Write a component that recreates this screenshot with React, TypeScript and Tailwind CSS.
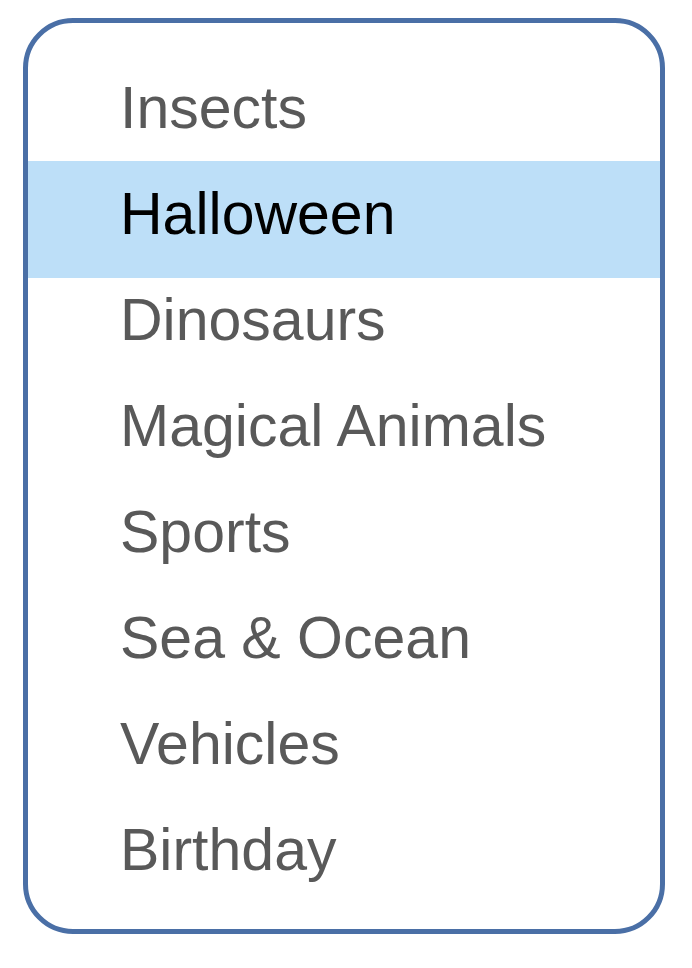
import React from 'react';

const items = ['Insects', 'Halloween', 'Dinosaurs', 'Magical Animals', 'Sports', 'Sea & Ocean', 'Vehicles', 'Birthday'];

const App: React.FC = () => {
  const selected = 'Halloween';

  return (
    <div className="w-[692px] h-[968px] bg-white pl-[23px] pt-[18px]" style={{ fontFamily: '"Liberation Sans", Arial, sans-serif' }}>
      <div className="w-[642px] h-[916px] border-[5px] border-[#4a6fa6] rounded-[50px] pt-[32px] flex flex-col">
        {items.map(item => (
          item === selected ? (
            <div key={item} className="h-[117px] -mb-[11px] bg-[#bddff8] pl-[92px] text-[59px] leading-[106px] text-black">
              {item}
            </div>
          ) : (
            <div key={item} className="h-[106px] pl-[92px] text-[59px] leading-[106px] text-[#595959]">
              {item}
            </div>
          )
        ))}
      </div>
    </div>
  );
};

export default App;
